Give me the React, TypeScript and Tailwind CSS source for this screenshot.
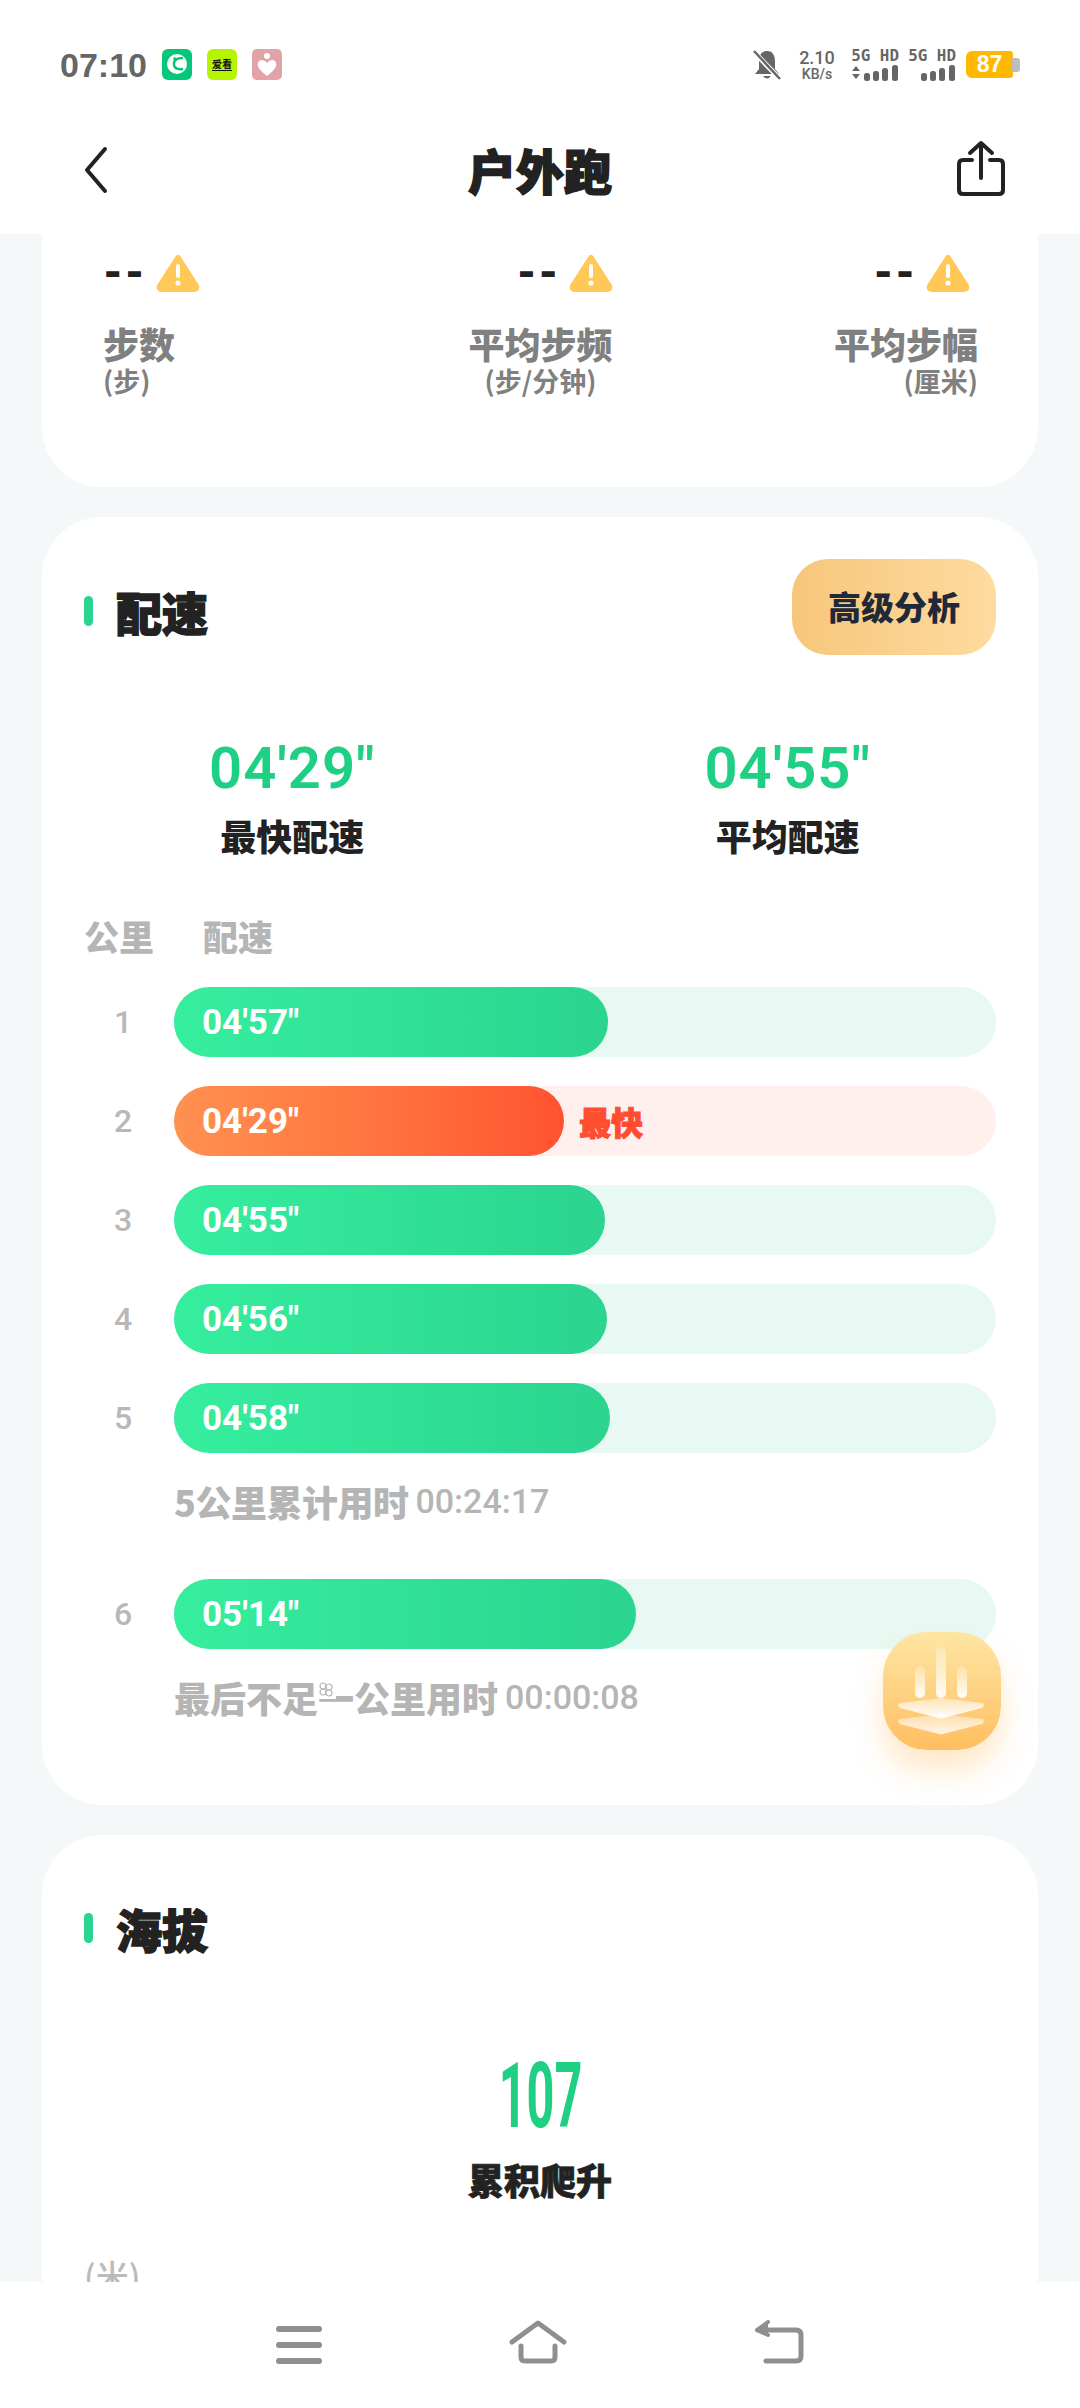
const cjk = "font-['Noto_Sans_CJK_SC',sans-serif]";
const num = "font-['Roboto',sans-serif]";

function Warn() {
  return (
    <svg width="46" height="40" viewBox="0 0 46 40" className="shrink-0">
      <path d="M23 5 L41 33 Q42 36 39 36 L7 36 Q4 36 5 33 Z" fill="#ffc857" stroke="#ffc857" strokeWidth="6" strokeLinejoin="round" />
      <rect x="21" y="11" width="4" height="14" rx="2" fill="#fff" />
      <circle cx="23" cy="30" r="2.6" fill="#fff" />
    </svg>
  );
}

function Stat({ label, unit, align, shift }: { label: string; unit: string; align: string; shift?: string }) {
  return (
    <div className={`flex flex-col ${align}`}>
      <div className={`flex items-center gap-[8px] h-[40px] ${shift ?? ''}`}>
        <span className={`${num} text-[44px] font-black leading-none tracking-[2px] text-[#222]`}>--</span>
        <Warn />
      </div>
      <div className={`${cjk} mt-[28px] text-[36px] font-black leading-[44px] text-[#808080]`}>{label}</div>
      <div className={`${cjk} text-[27px] font-bold leading-[32px] text-[#808080]`}>{unit}</div>
    </div>
  );
}

function SectionTitle({ text }: { text: string }) {
  return (
    <div className="flex items-center gap-[23px]">
      <div className="w-[9px] h-[30px] rounded-full bg-[#2bd48f]" />
      <span className={`${cjk} text-[46px] font-black leading-[60px] text-[#222] [-webkit-text-stroke:1.5px_#222]`}>{text}</span>
    </div>
  );
}

function Row({ n, pace, w, hot }: { n: number; pace: string; w: number; hot?: boolean }) {
  return (
    <div className="flex items-center h-[70px]">
      <div className={`${num} w-[90px] pl-[30px] text-[32px] font-medium text-[#b8b8b8] shrink-0`}>{n}</div>
      <div className={`relative flex-1 h-[70px] rounded-full flex items-center ${hot ? 'bg-[#fff0ee]' : 'bg-[#e8f9f3]'}`}>
        <div
          className={`h-[70px] rounded-full flex items-center pl-[28px] ${hot ? 'bg-gradient-to-r from-[#ff9150] to-[#ff5330]' : 'bg-gradient-to-r from-[#36ee9e] to-[#2bd48f]'}`}
          style={{ width: w }}
        >
          <span className={`${num} text-[35px] font-bold text-white leading-none`}>{pace}</span>
        </div>
        {hot && <span className={`${cjk} ml-[15px] text-[32px] font-black text-[#ff4d30] leading-none [-webkit-text-stroke:1px_#ff4d30]`}>最快</span>}
      </div>
    </div>
  );
}

function Note({ children, time, mt }: { children: React.ReactNode; time: string; mt: string }) {
  return (
    <div className={`${mt} pl-[90px] flex items-center gap-[7px] h-[48px] text-[#b5b5b5]`}>
      <span className={`${cjk} text-[36px] font-black leading-none`}>{children}</span>
      <span className={`${num} text-[34px] font-medium leading-none`}>{time}</span>
    </div>
  );
}

function Signal({ arrows }: { arrows?: boolean }) {
  return (
    <div className="flex flex-col items-end w-[48px]">
      <span className="font-['DejaVu_Sans_Mono',monospace] text-[15.9px] font-bold leading-[15px] text-[#666] whitespace-nowrap">5G HD</span>
      <svg width="48" height="18" viewBox="0 0 48 18" className="mt-[1px]">
        {arrows && <path d="M1 7 L5 2 L9 7 Z M1 10 L5 15 L9 10 Z" fill="#666" />}
        <rect x="13" y="9" width="6" height="8" rx="2.5" fill="#666" />
        <rect x="22" y="7" width="6" height="10" rx="2.5" fill="#666" />
        <rect x="31" y="4" width="6" height="13" rx="2.5" fill="#666" />
        <rect x="41" y="1" width="6" height="16" rx="2.5" fill="#666" />
      </svg>
    </div>
  );
}

export default function App() {
  return (
    <div className="relative w-[1080px] h-[2408px] flex flex-col overflow-hidden bg-[#f4f8f9]">
      {/* Status + nav */}
      <div className="bg-white h-[234px] shrink-0 z-10">
        <div className="h-[128px] flex items-center pl-[60px] pr-[60px] pt-[1px]">
          <span className="font-['Liberation_Sans',sans-serif] text-[34px] font-bold text-[#666] leading-none">07:10</span>
          <div className="ml-[15px] flex items-center gap-[15px]">
            <svg width="30" height="31" viewBox="0 0 30 31">
              <rect width="30" height="31" rx="6" fill="#05c77a" />
              <circle cx="15" cy="15" r="10" fill="#fff" />
              <path d="M21 9 Q11 9 12 16 Q13 21 21 20" fill="none" stroke="#05c77a" strokeWidth="2.5" />
              <circle cx="13" cy="10" r="1.8" fill="#05c77a" />
            </svg>
            <div className={`${cjk} w-[30px] h-[31px] rounded-[6px] bg-[#b6f500] flex flex-col items-center justify-center text-[10px] font-bold leading-[10px] text-[#111]`}>
              <span>爱看</span>
              <div className="w-[20px] h-[1px] bg-[#111] mt-[1px]" />
            </div>
            <svg width="30" height="31" viewBox="0 0 30 31">
              <rect width="30" height="31" rx="5" fill="#e2a3a6" />
              <circle cx="15" cy="7" r="3" fill="#fff" />
              <path d="M15 27 C7 21 5 17 6 14 C7 10 12 10 15 14 C18 10 23 10 24 14 C25 17 23 21 15 27 Z" fill="#fff" />
            </svg>
          </div>
          <div className="ml-auto flex items-center">
            <svg width="28" height="32" viewBox="0 0 28 32">
              <path d="M14 2 C8 2 6 7 6 12 L6 20 L2 25 L26 25 L22 20 L22 12 C22 7 20 2 14 2 Z M10 27 Q14 32 18 27 Z" fill="#666" />
              <path d="M1 3 L27 30" stroke="#fff" strokeWidth="5" />
              <path d="M1 2 L27 30" stroke="#666" strokeWidth="2.5" />
            </svg>
            <div className={`${num} ml-[17px] w-[38px] flex flex-col items-center text-[#666]`}>
              <span className="text-[18px] font-medium leading-[18px]">2.10</span>
              <span className="text-[14px] font-medium leading-[14px]">KB/s</span>
            </div>
            <div className="ml-[15px] flex gap-[9px]">
              <Signal arrows />
              <Signal />
            </div>
            <div className="ml-[10px] flex items-center">
              <div className="w-[47px] h-[27px] rounded-l-[6px] rounded-r-[3px] bg-[#ffb800] text-white font-['Liberation_Sans',sans-serif] text-[23px] font-bold flex items-center justify-center leading-none">87</div>
              <div className="w-[8px] h-[14px] rounded-r-[3px] bg-[#bdbdbd] -ml-[1px]" />
            </div>
          </div>
        </div>
        <div className="relative h-[90px] flex items-center justify-center pb-[8px]">
          <svg width="24" height="48" viewBox="0 0 24 48" className="absolute left-[84px] top-[18px]">
            <path d="M21 3 L3 24 L21 45" fill="none" stroke="#222" strokeWidth="4" strokeLinecap="round" strokeLinejoin="round" />
          </svg>
          <span className={`${cjk} text-[48px] font-black text-[#222] leading-none [-webkit-text-stroke:1.5px_#222]`}>户外跑</span>
          <svg width="48" height="56" viewBox="0 0 48 56" className="absolute left-[957px] top-[12px]">
            <path d="M15 20 H6 Q2 20 2 24 V50 Q2 54 6 54 H42 Q46 54 46 50 V24 Q46 20 42 20 H33" fill="none" stroke="#222" strokeWidth="4" strokeLinecap="round" />
            <path d="M24 38 V3 M13 13 L24 3 L35 13" fill="none" stroke="#222" strokeWidth="4" strokeLinecap="round" strokeLinejoin="round" />
          </svg>
        </div>
      </div>

      {/* Scroll area */}
      <div className="flex-1 min-h-0 overflow-hidden px-[42px] flex flex-col gap-[30px]">
        <div className="shrink-0 h-[253px] bg-white rounded-b-[60px] pl-[61px] pr-[60px] pt-[19px] grid grid-cols-3">
          <Stat label="步数" unit="(步)" align="items-start justify-self-start" />
          <Stat label="平均步频" unit="(步/分钟)" align="items-center justify-self-center" shift="ml-[50px]" />
          <Stat label="平均步幅" unit="(厘米)" align="items-end justify-self-end" shift="mr-[7px]" />
        </div>

        <div className="shrink-0 h-[1288px] bg-white rounded-[60px] px-[42px]">
          <div className="pt-[42px] flex items-start justify-between">
            <div className="pt-[22px]"><SectionTitle text="配速" /></div>
            <div className={`${cjk} w-[204px] h-[96px] rounded-[36px] bg-gradient-to-r from-[#f7c67b] to-[#fedb9f] flex items-center justify-center text-[33px] font-black text-[#1f2937]`}>高级分析</div>
          </div>
          <div className="mt-[83px] px-[125px] flex justify-between">
            {[["04'29\"", '最快配速'], ["04'55\"", '平均配速']].map(([v, l]) => (
              <div key={l} className="flex flex-col items-center">
                <span className={`${num} text-[58px] font-semibold leading-[60px] tracking-[1px] text-[#1fcf83]`}>{v}</span>
                <span className={`${cjk} mt-[14px] text-[36px] font-black leading-[46px] text-[#222]`}>{l}</span>
              </div>
            ))}
          </div>
          <div className={`${cjk} mt-[55px] flex text-[35px] font-black leading-[46px] text-[#b5b5b5]`}>
            <span className="w-[119px]">公里</span>
            <span>配速</span>
          </div>
          <div className="mt-[28px] flex flex-col gap-[29px]">
            <Row n={1} pace={"04'57\""} w={434} />
            <Row n={2} pace={"04'29\""} w={390} hot />
            <Row n={3} pace={"04'55\""} w={431} />
            <Row n={4} pace={"04'56\""} w={433} />
            <Row n={5} pace={"04'58\""} w={436} />
          </div>
          <Note mt="mt-[24px]" time="00:24:17"><span className="tracking-[-0.5px]">5公里累计用时</span></Note>
          <div className="mt-[54px]"><Row n={6} pace={"05'14\""} w={462} /></div>
          <Note mt="mt-[24px]" time="00:00:08">
            最后不足
            <span className="relative">
              一
              <svg width="18" height="18" viewBox="0 0 18 18" className="absolute left-[0px] top-[10px]">
                <rect width="18" height="18" fill="#fff" />
                <circle cx="5" cy="5" r="3" fill="none" stroke="#b5b5b5" strokeWidth="1.2" />
                <circle cx="11" cy="6" r="3" fill="none" stroke="#b5b5b5" strokeWidth="1.2" />
                <circle cx="5" cy="11" r="3" fill="none" stroke="#b5b5b5" strokeWidth="1.2" />
                <circle cx="11" cy="12" r="3" fill="none" stroke="#b5b5b5" strokeWidth="1.2" />
              </svg>
            </span>
            公里用时
          </Note>
        </div>

        <div className="shrink-0 bg-white rounded-t-[60px] px-[42px] h-[700px]">
          <div className="pt-[63px]"><SectionTitle text="海拔" /></div>
          <div className="mt-[94px] flex flex-col items-center">
            <span className={`${num} scale-x-[0.54] text-[90px] font-bold leading-[90px] text-[#1fcf83]`}>107</span>
            <span className={`${cjk} mt-[14px] text-[36px] font-black leading-[46px] text-[#222] [-webkit-text-stroke:0.8px_#222]`}>累积爬升</span>
          </div>
          <div className={`${cjk} mt-[53px] text-[33px] font-medium leading-[40px] text-[#bbb]`}>(米)</div>
        </div>
      </div>

      {/* Bottom nav */}
      <div className="h-[126px] shrink-0 bg-white z-10 flex items-start pt-[38px] justify-center gap-[187px]">
        <svg width="46" height="38" viewBox="0 0 46 38" className="mt-[6px]">
          <path d="M3 3 H43 M3 19 H43 M3 35 H43" stroke="#8f8f8f" strokeWidth="6" strokeLinecap="round" />
        </svg>
        <svg width="58" height="44" viewBox="0 0 58 44">
          <path d="M3 22 L29 3 L55 22" fill="none" stroke="#8f8f8f" strokeWidth="5" strokeLinecap="round" strokeLinejoin="round" />
          <path d="M12 26 V37 Q12 41 16 41 H42 Q46 41 46 37 V26" fill="none" stroke="#8f8f8f" strokeWidth="5" strokeLinecap="round" />
        </svg>
        <svg width="50" height="44" viewBox="0 0 50 44">
          <path d="M4 10 H42 Q47 10 47 15 V36 Q47 41 42 41 H12" fill="none" stroke="#8f8f8f" strokeWidth="5" strokeLinecap="round" />
          <path d="M14 2 L3 10 L14 15" fill="#8f8f8f" stroke="#8f8f8f" strokeWidth="4" strokeLinejoin="round" strokeLinecap="round" />
        </svg>
      </div>

      {/* Floating button */}
      <div className="absolute left-[883px] top-[1632px] w-[118px] h-[118px] rounded-[44px] bg-gradient-to-b from-[#fde6a3] to-[#ffbe60] shadow-[0_20px_30px_rgba(255,190,96,0.35)] z-[5]">
        <svg width="118" height="118" viewBox="0 0 118 118">
          <defs>
            <linearGradient id="b" x1="0" y1="0" x2="0" y2="1">
              <stop offset="0" stopColor="#fff" stopOpacity="0.25" />
              <stop offset="1" stopColor="#fff" stopOpacity="0.95" />
            </linearGradient>
            <linearGradient id="d" x1="0" y1="0" x2="0" y2="1">
              <stop offset="0" stopColor="#fff" stopOpacity="0.45" />
              <stop offset="1" stopColor="#fff" stopOpacity="1" />
            </linearGradient>
          </defs>
          <rect x="53" y="15" width="10" height="51" rx="5" fill="url(#b)" />
          <rect x="32" y="34" width="10" height="32" rx="5" fill="url(#b)" />
          <rect x="74" y="34" width="10" height="32" rx="5" fill="url(#b)" />
          <path d="M58 82 L99 87 Q103 89 99 92 L60 102 Q58 102.5 56 102 L17 92 Q13 89 17 87 Z" fill="url(#d)" opacity="0.85" />
          <path d="M58 66 L99 71 Q103 73 99 76 L60 86 Q58 86.5 56 86 L17 76 Q13 73 17 71 Z" fill="url(#d)" />
        </svg>
      </div>
    </div>
  );
}
